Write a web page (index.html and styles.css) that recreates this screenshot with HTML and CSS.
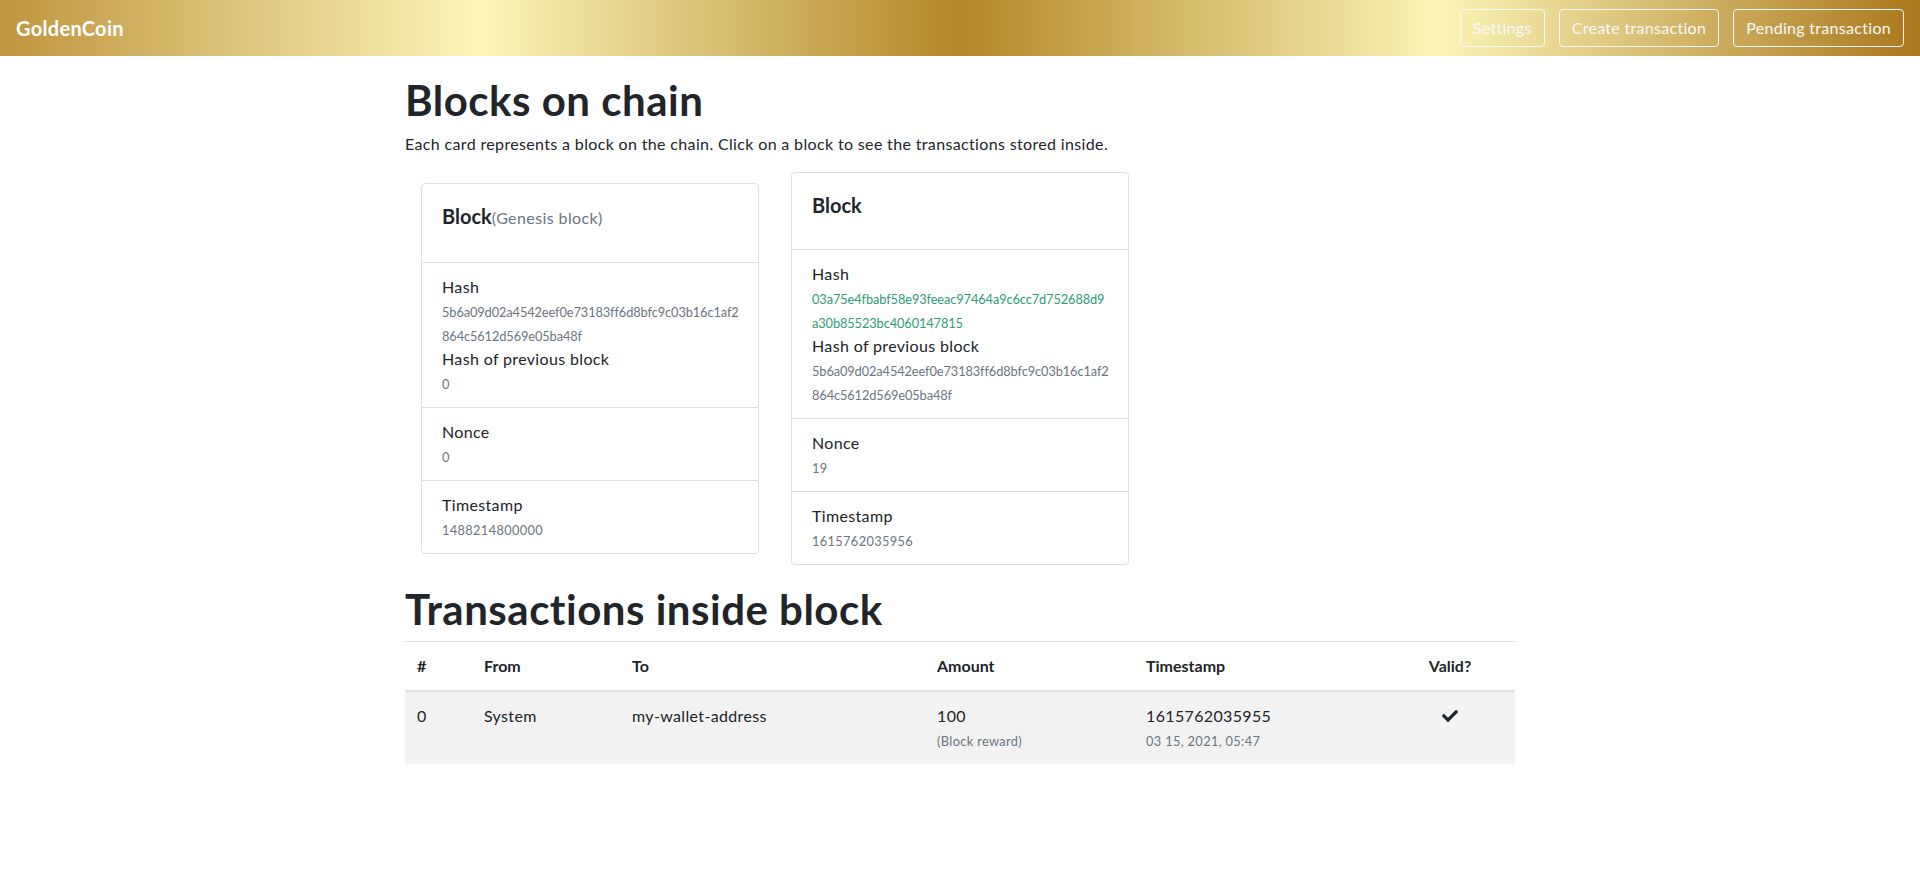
FILE: index.html
```html
<!DOCTYPE html>
<html lang="en">
<head>
<meta charset="utf-8">
<title>GoldenCoin</title>
<link rel="stylesheet" href="styles.css">
</head>
<body>
<nav class="navbar">
  <a class="brand" href="#">GoldenCoin</a>
  <div class="nav-actions">
    <button class="btn-outline">Settings</button>
    <button class="btn-outline">Create transaction</button>
    <button class="btn-outline">Pending transaction</button>
  </div>
</nav>

<main class="container">
  <h1 class="page-title">Blocks on chain</h1>
  <p class="lead-text">Each card represents a block on the chain. Click on a block to see the transactions stored inside.</p>

  <div class="blocks">
    <div class="card">
      <div class="card-body">
        <h5 class="card-title">Block<span class="card-sub">(Genesis block)</span></h5>
      </div>
      <ul class="list-group">
        <li class="list-item">
          Hash<br>
          <small class="hash muted">5b6a09d02a4542eef0e73183ff6d8bfc9c03b16c1af2<br>864c5612d569e05ba48f</small><br>
          Hash of previous block<br>
          <small class="hash muted">0</small>
        </li>
        <li class="list-item">
          Nonce<br>
          <small class="muted">0</small>
        </li>
        <li class="list-item">
          Timestamp<br>
          <small class="muted">1488214800000</small>
        </li>
      </ul>
    </div>

    <div class="card">
      <div class="card-body">
        <h5 class="card-title">Block</h5>
      </div>
      <ul class="list-group">
        <li class="list-item">
          Hash<br>
          <small class="hash valid">03a75e4fbabf58e93feeac97464a9c6cc7d752688d9<br>a30b85523bc4060147815</small><br>
          Hash of previous block<br>
          <small class="hash muted">5b6a09d02a4542eef0e73183ff6d8bfc9c03b16c1af2<br>864c5612d569e05ba48f</small>
        </li>
        <li class="list-item">
          Nonce<br>
          <small class="muted">19</small>
        </li>
        <li class="list-item">
          Timestamp<br>
          <small class="muted">1615762035956</small>
        </li>
      </ul>
    </div>
  </div>

  <h1 class="page-title">Transactions inside block</h1>
  <table class="tx-table">
    <colgroup>
      <col class="c-num">
      <col class="c-from">
      <col class="c-to">
      <col class="c-amount">
      <col class="c-time">
      <col class="c-valid">
    </colgroup>
    <thead>
      <tr>
        <th>#</th>
        <th>From</th>
        <th>To</th>
        <th>Amount</th>
        <th>Timestamp</th>
        <th class="center">Valid?</th>
      </tr>
    </thead>
    <tbody>
      <tr>
        <td>0</td>
        <td>System</td>
        <td>my-wallet-address</td>
        <td>100<br><small class="muted">(Block reward)</small></td>
        <td>1615762035955<br><small class="muted">03 15, 2021, 05:47</small></td>
        <td class="center">
          <svg class="check" viewBox="0 0 512 512" aria-hidden="true"><path d="M173.898 439.404l-166.4-166.4c-9.997-9.997-9.997-26.206 0-36.204l36.203-36.204c9.997-9.998 26.207-9.998 36.204 0L192 312.69 432.095 72.596c9.997-9.997 26.207-9.997 36.204 0l36.203 36.204c9.997 9.997 9.997 26.206 0 36.204l-294.4 294.401c-9.998 9.997-26.207 9.997-36.204-.001z"/></svg>
        </td>
      </tr>
    </tbody>
  </table>
</main>
</body>
</html>
```

FILE: styles.css
```css
* { box-sizing: border-box; }

body {
  margin: 0;
  font-family: "Lato", "Open Sans", sans-serif;
  font-size: 16px;
  font-weight: 400;
  line-height: 1.5;
  letter-spacing: 0.35px;
  color: #212529;
  background: #fff;
}

.navbar {
  display: flex;
  align-items: center;
  justify-content: space-between;
  height: 56px;
  padding: 0 16px;
  background: linear-gradient(to right, #BF953F, #FCF6BA, #B38728, #FBF5B7, #AA771C);
}

.brand {
  color: #fff;
  font-size: 20px;
  font-weight: 700;
  line-height: 30px;
  letter-spacing: 0.3px;
  text-decoration: none;
}

.nav-actions {
  display: flex;
  gap: 14px;
}

.btn-outline {
  font-family: inherit;
  font-size: 16px;
  font-weight: 400;
  letter-spacing: 0.3px;
  line-height: 24px;
  padding: 6px 12px;
  color: #f8f9fa;
  background: transparent;
  border: 1px solid #f8f9fa;
  border-radius: 4px;
}

.container {
  width: 1110px;
  margin: 0 auto;
}

.page-title {
  font-size: 42px;
  font-weight: 700;
  line-height: 48px;
  letter-spacing: 0.5px;
  margin: 20px 0 8px;
  color: #212529;
}

.lead-text {
  margin: 0 0 16px;
}

.blocks {
  display: flex;
  align-items: center;
}

.card {
  width: 338px;
  margin: 0 16px;
  border: 1px solid #dfdfdf;
  border-radius: 4px;
  background: #fff;
}

.card-body {
  padding: 20px;
}

.card-title {
  margin: 0 0 12px;
  font-size: 20px;
  font-weight: 700;
  line-height: 24px;
  letter-spacing: 0;
}

.card-sub {
  font-size: 16px;
  font-weight: 400;
  letter-spacing: 0.4px;
  color: #6c757d;
}

.list-group {
  list-style: none;
  margin: 0;
  padding: 0;
}

.list-item {
  border-top: 1px solid #dfdfdf;
  padding: 12px 20px;
}

small {
  font-size: 12.8px;
}

.muted { color: #6c757d; }
.valid { color: #2f9c78; }

.hash {
  letter-spacing: -0.1px;
}

.tx-table {
  width: 100%;
  border-collapse: collapse;
  table-layout: fixed;
}

.c-num { width: 67px; }
.c-from { width: 148px; }
.c-to { width: 305px; }
.c-amount { width: 209px; }
.c-time { width: 251px; }
.c-valid { width: 130px; }

.tx-table th,
.tx-table td {
  padding: 12px;
  border-top: 1px solid #dee2e6;
  text-align: left;
  vertical-align: top;
}

.tx-table th {
  font-weight: 700;
  letter-spacing: 0;
  border-bottom: 2px solid #dee2e6;
}

.tx-table tbody tr:nth-of-type(odd) {
  background: #f2f2f2;
}

.tx-table .center {
  text-align: center;
}

.check {
  width: 16px;
  height: 16px;
  fill: #212529;
  vertical-align: -2px;
}
```
